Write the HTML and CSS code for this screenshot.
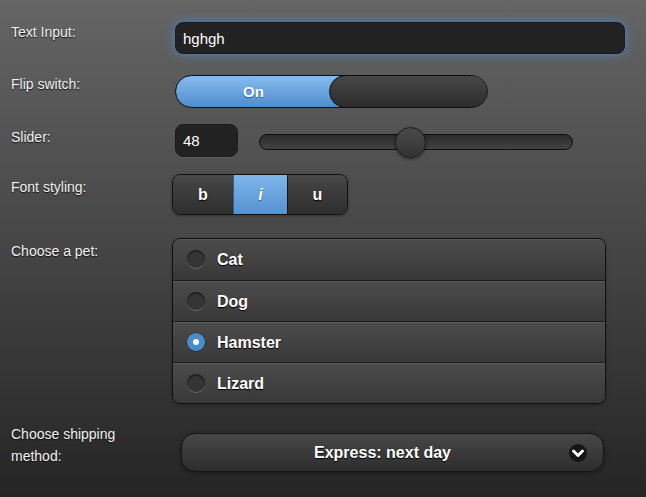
FILE: index.html
```html
<!DOCTYPE html>
<html lang="en">
<head>
  <meta charset="UTF-8" />
  <meta name="viewport" content="width=device-width, initial-scale=1" />
  <title>Form elements</title>
  <link rel="stylesheet" href="styles.css">
</head>
<body>

  <form class="form">

    <div class="field field-text">
      <label class="field-label" for="textInput">Text Input:</label>
      <input type="text" id="textInput" class="text-input" value="hghgh" />
    </div>

    <div class="field field-flip">
      <span class="field-label">Flip switch:</span>
      <div class="flip">
        <span class="flip-on">On</span>
        <span class="flip-handle"></span>
      </div>
    </div>

    <div class="field field-slider">
      <label class="field-label" for="sliderValue">Slider:</label>
      <input type="text" id="sliderValue" class="num-input" value="48" />
      <div class="slider">
        <div class="slider-track"></div>
        <span class="slider-handle" style="left: 48%"></span>
      </div>
    </div>

    <div class="field field-style">
      <span class="field-label">Font styling:</span>
      <div class="button-group">
        <button type="button" class="btn btn-wide">b</button>
        <button type="button" class="btn btn-active"><em>i</em></button>
        <button type="button" class="btn btn-wide">u</button>
      </div>
    </div>

    <div class="field field-pet">
      <span class="field-label">Choose a pet:</span>
      <div class="radio-group">
        <label class="radio-row"><span class="radio-icon"></span>Cat</label>
        <label class="radio-row"><span class="radio-icon"></span>Dog</label>
        <label class="radio-row"><span class="radio-icon checked"></span>Hamster</label>
        <label class="radio-row"><span class="radio-icon"></span>Lizard</label>
      </div>
    </div>

    <div class="field field-select">
      <span class="field-label">Choose shipping method:</span>
      <div class="select-btn">
        <span class="select-text">Express: next day</span>
        <svg class="select-arrow" width="20" height="20" viewBox="0 0 20 20">
          <circle cx="10" cy="10" r="9" fill="#151515" />
          <path d="M5.5 8 L10 12.5 L14.5 8" fill="none" stroke="#fff" stroke-width="3" stroke-linecap="round" stroke-linejoin="round" />
        </svg>
      </div>
    </div>

  </form>

</body>
</html>
```

FILE: styles.css
```css
/* Base */
* {
  box-sizing: border-box;
}
html {
  height: 100%;
}
body {
  margin: 0;
  min-height: 100%;
  font-family: "Liberation Sans", Arial, sans-serif;
  color: #fff;
  background: linear-gradient(#656565, #252525) no-repeat;
  background-color: #252525;
}

.form {
  padding: 22px 0 0 11px;
}

/* Rows */
.field {
  display: flex;
  align-items: flex-start;
}
.field-label {
  width: 164px;
  flex-shrink: 0;
  font-size: 14px;
  line-height: 20px;
  color: #f2f2f2;
  text-shadow: 0 1px 1px #111;
}
.field-text { margin-bottom: 21px; }
.field-flip { margin-bottom: 16px; }
.field-flip .field-label { margin-top: -1px; }
.field-slider { margin-bottom: 17px; }
.field-slider .field-label { padding-top: 3px; }
.field-style { margin-bottom: 23px; }
.field-style .field-label { padding-top: 3px; }
.field-pet { margin-bottom: 29px; }
.field-pet .field-label { padding-top: 3px; }
.field-select .field-label {
  margin-top: -10px;
  line-height: 22px;
  width: 170px;
  padding-right: 20px;
}

/* Text inputs */
.text-input,
.num-input {
  font-family: inherit;
  font-size: 15px;
  color: #fff;
  background: #222;
  border: 1px solid #1a1a1a;
  border-radius: 8px;
  outline: none;
  padding: 0 7px;
}
.text-input {
  width: 450px;
  height: 32px;
  box-shadow: 0 0 10px 1px #4f7fae;
}
.num-input {
  width: 63px;
  height: 33px;
  box-shadow: 0 1px 0 rgba(255, 255, 255, 0.08);
}

/* Flip switch */
.flip {
  position: relative;
  width: 313px;
  height: 33px;
  border: 1px solid #0e0e0e;
  border-radius: 17px;
  background: linear-gradient(#86bcef, #4f8dcc);
  overflow: hidden;
}
.flip-on {
  display: block;
  width: 155px;
  line-height: 31px;
  text-align: center;
  font-weight: bold;
  font-size: 15px;
  text-shadow: 0 1px 1px #2a5b8c;
}
.flip-handle {
  position: absolute;
  top: -1px;
  right: -1px;
  width: 159px;
  height: 33px;
  border: 1px solid #111;
  border-radius: 17px;
  background: linear-gradient(#474747, #2c2c2c);
}

/* Slider */
.slider {
  position: relative;
  width: 314px;
  height: 33px;
  margin-left: 21px;
}
.slider-track {
  margin-top: 10px;
  height: 16px;
  border: 1px solid #0e0e0e;
  border-radius: 8px;
  background: linear-gradient(#2b2b2b, #434343);
}
.slider-handle {
  position: absolute;
  top: 3px;
  width: 31px;
  height: 31px;
  margin-left: -15px;
  border: 1px solid #1c1c1c;
  border-radius: 50%;
  background: linear-gradient(#4a4a4a, #333);
  box-shadow: 0 1px 3px rgba(0, 0, 0, 0.5);
}

/* Button group */
.button-group {
  display: flex;
  margin-left: -3px;
  border: 1px solid #111;
  border-radius: 8px;
  overflow: hidden;
  box-shadow: 0 1px 3px rgba(0, 0, 0, 0.3);
}
.btn {
  width: 54px;
  height: 39px;
  border: 0;
  border-left: 1px solid #151515;
  padding: 0;
  font-family: inherit;
  font-size: 16px;
  font-weight: bold;
  color: #fff;
  text-shadow: 0 1px 1px #000;
  background: linear-gradient(#474747, #2e2e2e);
}
.btn:first-child {
  border-left: 0;
}
.btn-wide {
  width: 60px;
}
.btn-active {
  background: linear-gradient(#7fb5ea, #5592d1);
  border-left-color: #2f5f8f;
  text-shadow: 0 1px 1px #2a5b8c;
}

/* Radio group */
.radio-group {
  width: 434px;
  margin-left: -3px;
  border: 1px solid #111;
  border-radius: 8px;
  overflow: hidden;
  box-shadow: 0 1px 3px rgba(0, 0, 0, 0.3);
}
.radio-row {
  display: flex;
  align-items: center;
  height: 41px;
  padding-left: 44px;
  position: relative;
  border-top: 1px solid #5a5a5a;
  border-bottom: 1px solid #1c1c1c;
  background: linear-gradient(#4b4b4b, #383838);
  font-size: 16px;
  font-weight: bold;
  text-shadow: 0 1px 1px #000;
}
.radio-row:first-child {
  height: 42px;
  border-top-color: #555;
}
.radio-row:last-child {
  height: 40px;
  border-bottom: 0;
}
.radio-icon {
  position: absolute;
  left: 14px;
  top: 50%;
  margin-top: -10px;
  width: 18px;
  height: 18px;
  border-radius: 50%;
  background: #353535;
  box-shadow: inset 0 1px 2px rgba(0, 0, 0, 0.7), 0 1px 0 rgba(255, 255, 255, 0.22);
}
.radio-icon.checked {
  background: #4a8bcb;
  box-shadow: 0 0 2px rgba(0, 0, 0, 0.5);
}
.radio-icon.checked::after {
  content: "";
  position: absolute;
  left: 6px;
  top: 6px;
  width: 6px;
  height: 6px;
  border-radius: 50%;
  background: #fff;
}

/* Select */
.select-btn {
  position: relative;
  display: flex;
  align-items: center;
  justify-content: center;
  width: 423px;
  height: 39px;
  padding-right: 20px;
  border: 1px solid #151515;
  border-radius: 14px;
  background: linear-gradient(#474747, #2d2d2d);
  box-shadow: 0 1px 4px rgba(0, 0, 0, 0.4);
}
.select-text {
  font-size: 16px;
  font-weight: bold;
  text-shadow: 0 1px 1px #000;
}
.select-arrow {
  position: absolute;
  right: 15px;
  top: 9px;
}
```
